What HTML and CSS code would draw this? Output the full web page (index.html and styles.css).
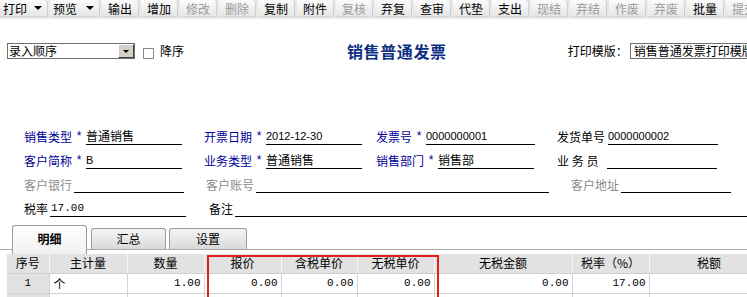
FILE: index.html
```html
<!DOCTYPE html>
<html lang="zh-CN">
<head>
<meta charset="utf-8">
<title>销售普通发票</title>
<link rel="stylesheet" href="styles.css">
</head>
<body>
<div class="toolbar">
  <div class="tb dd w48"><span>打印</span><i class="tri"></i></div>
  <div class="tb dd w50"><span>预览</span><i class="tri"></i></div>
  <div class="tb">输出</div>
  <div class="tb">增加</div>
  <div class="tb off">修改</div>
  <div class="tb off">删除</div>
  <div class="tb">复制</div>
  <div class="tb">附件</div>
  <div class="tb off">复核</div>
  <div class="tb">弃复</div>
  <div class="tb">查审</div>
  <div class="tb">代垫</div>
  <div class="tb">支出</div>
  <div class="tb off">现结</div>
  <div class="tb off">弃结</div>
  <div class="tb off">作废</div>
  <div class="tb off">弃废</div>
  <div class="tb">批量</div>
  <div class="tb off">提交</div>
</div>

<div class="topbar">
  <div class="sel"><span class="sel-text">录入顺序</span><span class="sel-btn"><i class="tri"></i></span></div>
  <span class="chk"></span><span class="chk-label">降序</span>
  <h1 class="title">销售普通发票</h1>
  <span class="tpl-label">打印模版：</span>
  <div class="tpl">销售普通发票打印模版</div>
</div>

<div class="form">
  <div class="row">
    <div class="fld"><span class="lbl req w48">销售类型</span><span class="star">*</span><span class="val w96">普通销售</span></div>
    <div class="fld g22"><span class="lbl req w48">开票日期</span><span class="star">*</span><span class="val w96 num">2012-12-30</span></div>
    <div class="fld g14"><span class="lbl req w36">发票号</span><span class="star">*</span><span class="val w109 num">0000000001</span></div>
    <div class="fld g22"><span class="lbl w48">发货单号</span><span class="val w110 m3 num">0000000002</span></div>
  </div>
  <div class="row">
    <div class="fld"><span class="lbl req w48">客户简称</span><span class="star">*</span><span class="val w96 num">B</span></div>
    <div class="fld g22"><span class="lbl req w48">业务类型</span><span class="star">*</span><span class="val w96">普通销售</span></div>
    <div class="fld g14"><span class="lbl req w48">销售部门</span><span class="star">*</span><span class="val w96">销售部</span></div>
    <div class="fld g23"><span class="lbl w48">业 务 员</span><span class="val w110 m2"></span></div>
  </div>
  <div class="row">
    <div class="fld"><span class="lbl dim w48">客户银行</span><span class="val w110 m2"></span></div>
    <div class="fld g22"><span class="lbl dim w48">客户账号</span><span class="val w293 m2"></span></div>
    <div class="fld g22"><span class="lbl dim w48">客户地址</span><span class="val w110 m2"></span></div>
  </div>
  <div class="row">
    <div class="fld"><span class="lbl w24">税率</span><span class="val w136 m2 mono">17.00</span></div>
    <div class="fld g23 grow"><span class="lbl w24">备注</span><span class="val grow m2"></span></div>
  </div>
</div>

<div class="tabs">
  <div class="tab active">明细</div>
  <div class="tab">汇总</div>
  <div class="tab w78">设置</div>
</div>

<div class="grid-wrap">
  <table class="grid">
    <colgroup>
      <col class="c42"><col class="c78"><col class="c77"><col class="c77"><col class="c76"><col class="c77"><col class="c138"><col class="c77"><col class="c120">
    </colgroup>
    <thead>
      <tr><th>序号</th><th>主计量</th><th>数量</th><th>报价</th><th>含税单价</th><th>无税单价</th><th>无税金额</th><th>税率（%）</th><th>税额</th></tr>
    </thead>
    <tbody>
      <tr><td class="idx">1</td><td class="txt">个</td><td class="n">1.00</td><td class="n">0.00</td><td class="n">0.00</td><td class="n">0.00</td><td class="n">0.00</td><td class="n">17.00</td><td class="n"></td></tr>
      <tr><td class="idx"></td><td></td><td></td><td></td><td></td><td></td><td></td><td></td><td></td></tr>
    </tbody>
  </table>
  <div class="hilite"></div>
</div>
</body>
</html>
```

FILE: styles.css
```css
* { box-sizing: border-box; }
html, body { margin: 0; padding: 0; }
body {
  width: 747px;
  height: 297px;
  overflow: hidden;
  background: #fff;
  color: #000;
  font-family: "Noto Sans CJK SC", "Noto Sans", sans-serif;
  font-size: 12px;
  line-height: 16px;
}

/* toolbar */
.toolbar {
  display: flex;
  height: 19px;
  background: #e8e8e8;
  align-items: flex-start;
  white-space: nowrap;
  overflow: hidden;
}
.tb {
  flex: none;
  width: 37px;
  height: 17px;
  line-height: 17px;
  margin-right: 2px;
  text-align: center;
  background: linear-gradient(#fbfbfb, #e6e6e6);
  border-right: 1px solid #cfcfcf;
  border-bottom: 1px solid #d6d6d6;
  border-radius: 0 4px 0 0;
}
.tb.off { color: #9a9a9a; }
.tb.dd {
  display: flex;
  align-items: center;
  justify-content: space-between;
  padding: 0 5px 0 3px;
  text-align: left;
}
.tb.w48 { width: 48px; }
.tb.w50 { width: 50px; }
.tri {
  display: block;
  width: 0;
  height: 0;
  border-left: 4px solid transparent;
  border-right: 4px solid transparent;
  border-top: 4px solid #000;
}

/* top bar */
.topbar {
  display: flex;
  align-items: center;
  height: 16px;
  margin-top: 24px;
  padding-left: 7px;
  white-space: nowrap;
}
.sel {
  display: flex;
  flex: none;
  width: 128px;
  height: 16px;
  border: 1px solid #6f6f6f;
  background: #fff;
}
.sel-text { flex: 1; padding-left: 1px; line-height: 14px; }
.sel-btn {
  width: 16px;
  height: 14px;
  display: flex;
  align-items: center;
  justify-content: center;
  background: #d4d0c8;
  border: 1px solid;
  border-color: #fff #404040 #404040 #fff;
}
.sel-btn .tri { border-left-width: 3px; border-right-width: 3px; border-top-width: 3px; }
.chk {
  flex: none;
  width: 11px;
  height: 11px;
  margin-left: 8px;
  margin-top: 4px;
  border: 1px solid #8a8a8a;
  background: #fff;
}
.chk-label { margin-left: 6px; }
.title {
  flex: none;
  margin: 0 0 0 163px;
  font-size: 16px;
  font-weight: bold;
  color: #0d2f82;
  line-height: 22px;
  letter-spacing: 0.6px;
}
.tpl-label { flex: none; margin-left: 121px; }
.tpl {
  margin-left: 2px;
  flex: 1;
  min-width: 0;
  height: 16px;
  line-height: 14px;
  padding-left: 3px;
  border: 1px solid #6f6f6f;
  border-right: 0;
  overflow: hidden;
}

/* form */
.form {
  margin-top: 69px;
  padding-left: 24px;
}
.row {
  display: flex;
  height: 24px;
  white-space: nowrap;
}
.fld { display: flex; height: 17px; align-items: flex-start; }
.fld.grow, .val.grow { flex: 1; }
.g14 { margin-left: 14px; }
.g22 { margin-left: 22px; }
.g23 { margin-left: 23px; }
.lbl { height: 16px; line-height: 17px; }
.lbl.req { color: #000097; }
.lbl.dim { color: #8c8c8c; }
.w24 { width: 24px; }
.w36 { width: 36px; }
.w48 { width: 48px; }
.star {
  width: 14px;
  text-align: center;
  color: #000097;
  font-family: "Liberation Mono", monospace;
  font-size: 12px;
  line-height: 19px;
}
.val {
  height: 17px;
  line-height: 16px;
  border-bottom: 1px solid #000;
  overflow: hidden;
}
.val.num { font-family: "Liberation Sans", sans-serif; font-size: 11px; }
.val.mono { font-family: "Liberation Mono", monospace; font-size: 11px; padding-left: 1px; }
.m2 { margin-left: 2px; }
.m3 { margin-left: 3px; }
.w96 { width: 96px; }
.w109 { width: 109px; }
.w110 { width: 110px; }
.w136 { width: 136px; }
.w293 { width: 293px; }

/* tabs */
.tabs {
  display: flex;
  align-items: flex-end;
  height: 25px;
  margin-top: 1px;
  padding-left: 12px;
  border-bottom: 1px solid #a9a9a9;
}
.tab {
  width: 75px;
  height: 21px;
  margin-right: 3px;
  text-align: center;
  line-height: 20px;
  border: 1px solid #9c9c9c;
  border-bottom: 0;
  border-radius: 3px 3px 0 0;
  background: linear-gradient(#f4f4f4, #d9d9d9);
}
.tab.w78 { width: 78px; }
.tab.active {
  height: 29px;
  margin-bottom: -5px;
  margin-right: 4px;
  font-weight: bold;
  line-height: 26px;
  background: linear-gradient(#ffffff, #f1f1f1);
  position: relative;
  z-index: 1;
}

/* grid */
.grid-wrap {
  position: relative;
  margin-top: 4px;
  padding-left: 7px;
}
.grid {
  width: 762px;
  table-layout: fixed;
  border-collapse: collapse;
}
.c42 { width: 42px; }
.c76 { width: 76px; }
.c77 { width: 77px; }
.c78 { width: 78px; }
.c120 { width: 120px; }
.c138 { width: 138px; }
.grid th {
  height: 19px;
  padding: 0;
  font-weight: normal;
  background: #e2e2e2;
  border-right: 1px solid #f7f7f7;
  border-bottom: 1px solid #cfcfcf;
  text-align: center;
  line-height: 18px;
  white-space: nowrap;
  overflow: hidden;
}
.grid td {
  height: 20px;
  padding: 0 3px;
  border-right: 1px solid #d3d3d3;
  border-bottom: 1px solid #d3d3d3;
  line-height: 19px;
  white-space: nowrap;
  overflow: hidden;
}
.grid td.idx {
  background: #e2e2e2;
  text-align: center;
  font-family: "Liberation Mono", monospace;
  font-size: 11px;
}
.grid td.n {
  text-align: right;
  font-family: "Liberation Mono", monospace;
  font-size: 11px;
}
.grid td.txt { padding-left: 4px; }
.hilite {
  position: absolute;
  left: 207px;
  top: 1px;
  width: 232px;
  height: 60px;
  border: 2px solid #e41e1e;
}
```
